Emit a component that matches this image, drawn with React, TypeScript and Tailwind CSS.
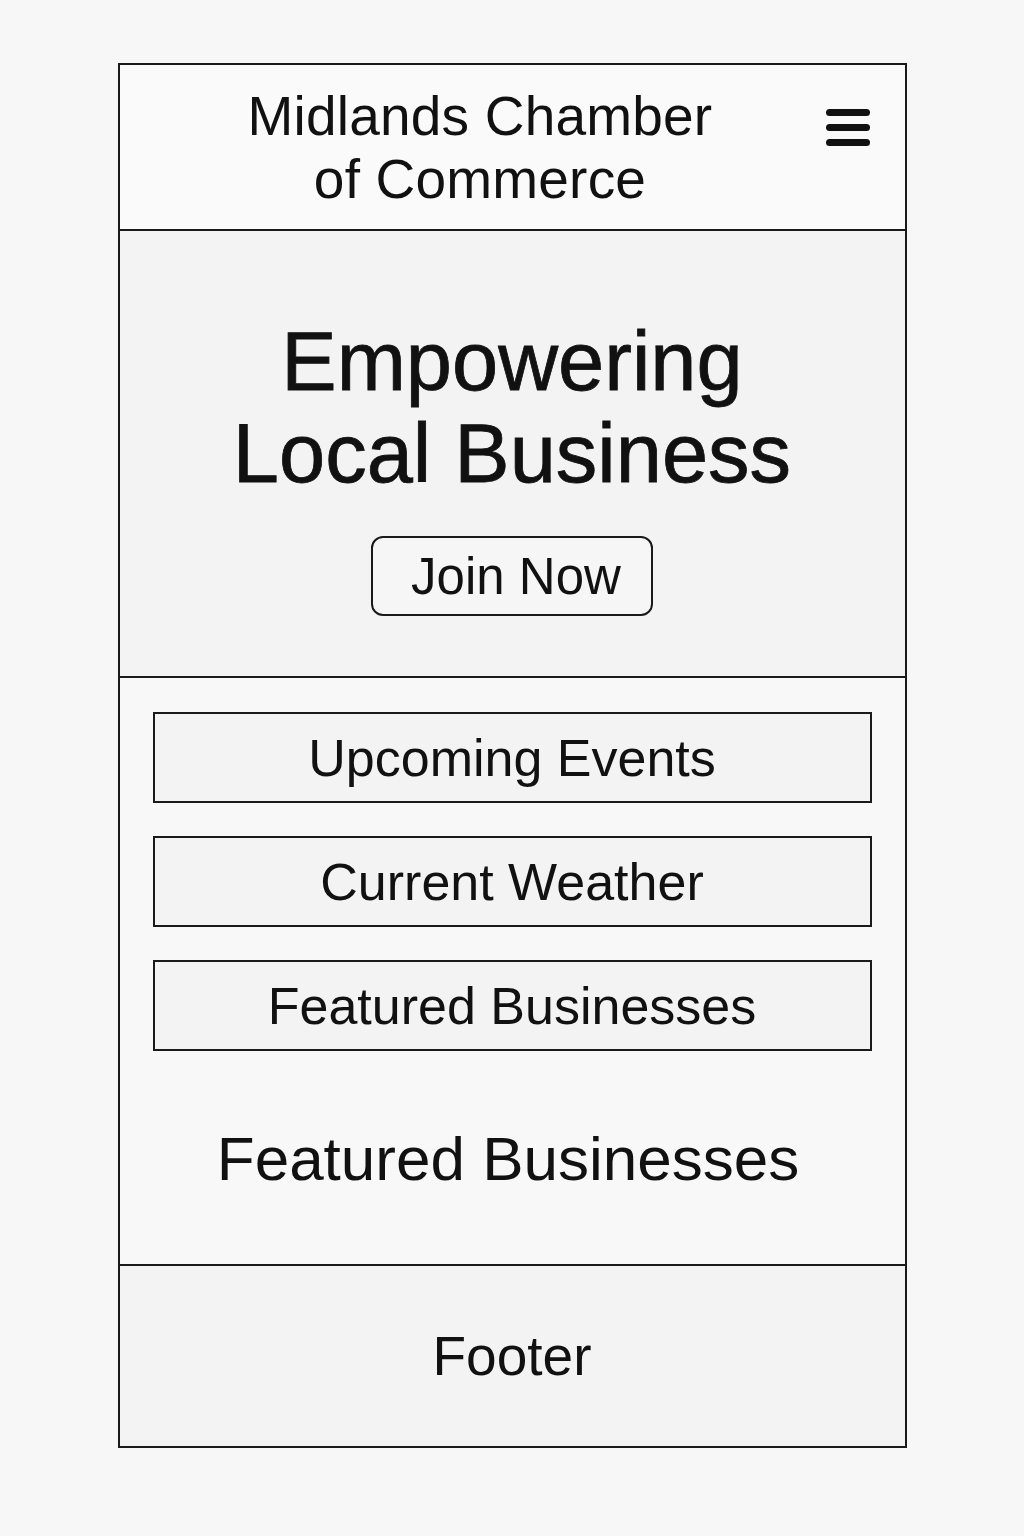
import React from "react";

export default function App() {
  const font = { fontFamily: '"Liberation Sans", Arial, Helvetica, sans-serif' };
  return (
    <div
      className="min-h-[1536px] w-full bg-[#f7f7f7] pt-[63px] flex justify-center text-[#111]"
      style={font}
    >
      <div className="w-[789px] h-[1385px] border-2 border-[#1a1a1a] flex flex-col">
        {/* Header */}
        <header className="h-[166px] shrink-0 border-b-2 border-[#1a1a1a] bg-[#fafafa] flex items-start">
          <div className="flex-1 h-full flex items-center justify-center pl-[18px]">
            <h1 className="text-[55px] leading-[63px] text-center font-normal tracking-[0.2px] mt-[2px]">
              Midlands Chamber
              <br />
              of Commerce
            </h1>
          </div>
          <button
            aria-label="Menu"
            className="mt-[44px] mr-[35px] ml-[3px] w-[44px] flex flex-col gap-[8px]"
          >
            <span className="block h-[7px] w-[44px] rounded-full bg-[#111]" />
            <span className="block h-[7px] w-[44px] rounded-full bg-[#111]" />
            <span className="block h-[7px] w-[44px] rounded-full bg-[#111]" />
          </button>
        </header>

        {/* Hero */}
        <section className="shrink-0 border-b-2 border-[#1a1a1a] bg-[#f3f3f3] pt-[85px] pb-[60px] flex flex-col items-center">
          <h2 className="text-[83px] leading-[92px] text-center font-normal [-webkit-text-stroke:0.8px_#111]">
            Empowering
            <br />
            Local Business
          </h2>
          <button className="mt-[36px] w-[282px] h-[80px] rounded-[12px] border-2 border-[#1a1a1a] bg-[#f6f6f6] flex items-center justify-center pl-[8px] text-[51px] leading-none">
            Join Now
          </button>
        </section>

        {/* Content */}
        <section className="shrink-0 border-b-2 border-[#1a1a1a] bg-[#f8f8f8] pt-[34px] pb-[70px] px-[33px] flex flex-col">
          <div className="flex flex-col gap-[33px]">
            {["Upcoming Events", "Current Weather", "Featured Businesses"].map((t) => (
              <div
                key={t}
                className="h-[91px] border-2 border-[#1a1a1a] bg-[#f3f3f3] flex items-center justify-center text-[52px] leading-none"
              >
                {t}
              </div>
            ))}
          </div>
          <h3 className="mt-[73px] text-[62px] leading-[70px] text-center font-normal pr-[8px]">
            Featured Businesses
          </h3>
        </section>

        {/* Footer */}
        <footer className="flex-1 bg-[#f3f3f3] flex items-center justify-center">
          <span className="text-[55px] leading-none">Footer</span>
        </footer>
      </div>
    </div>
  );
}
